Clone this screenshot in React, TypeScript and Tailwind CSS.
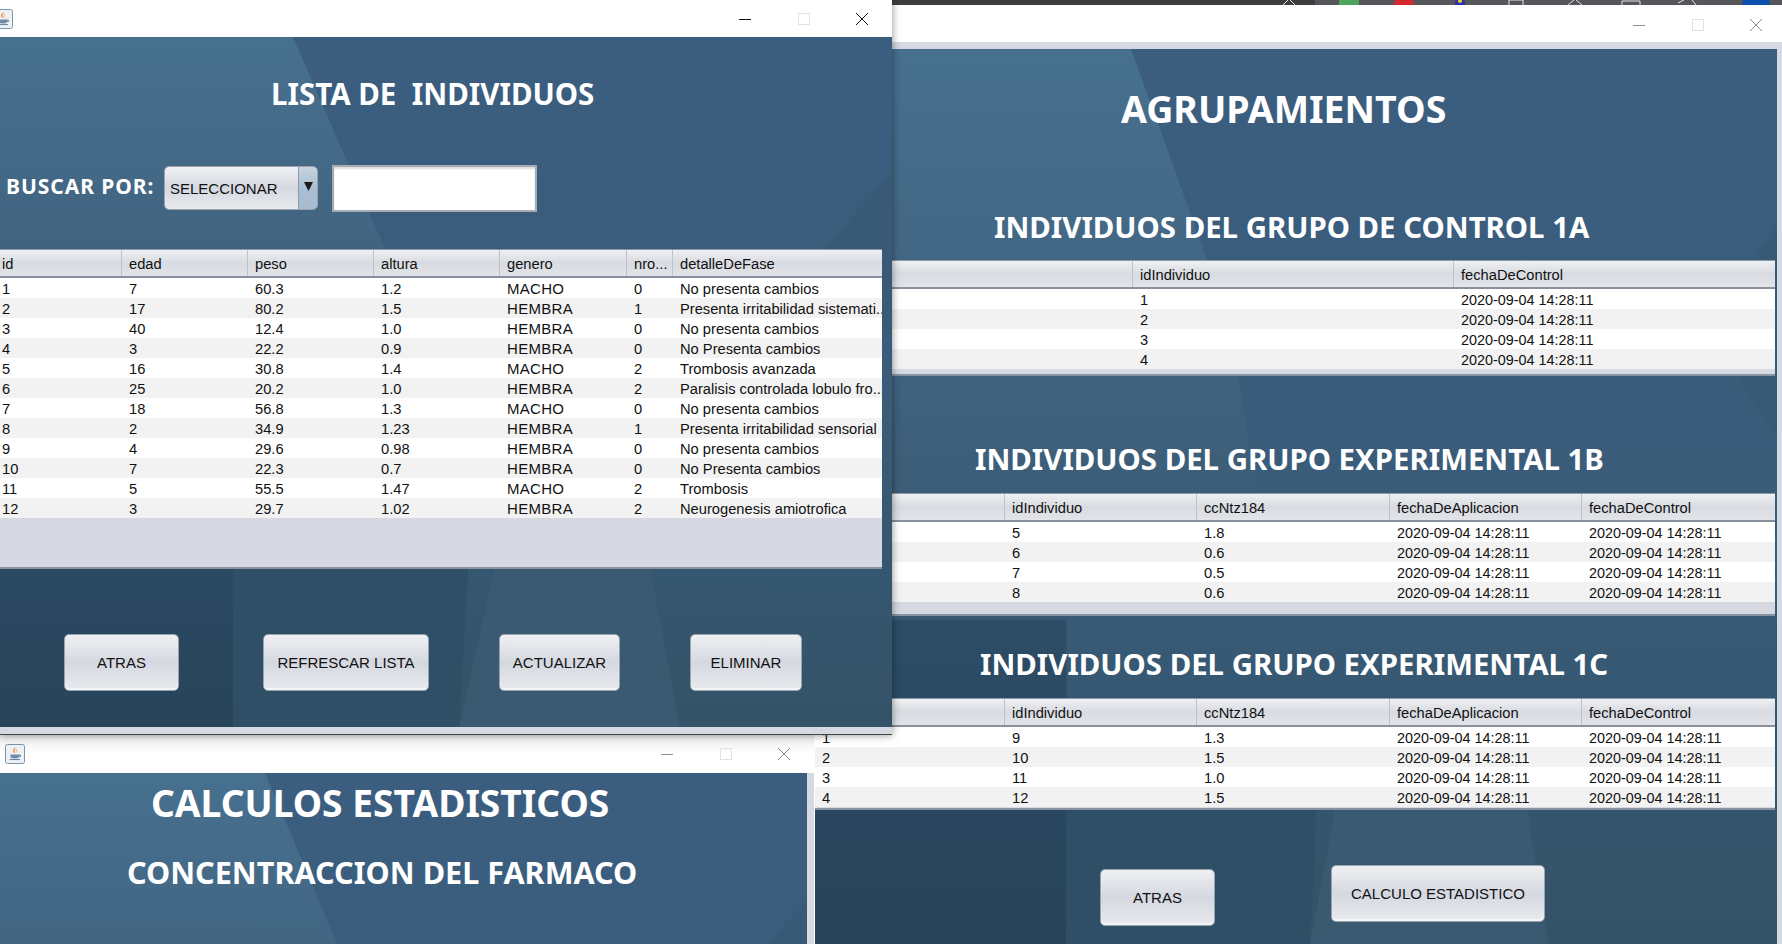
import React from "react";

const UI = "font-['Liberation_Sans',Arial,sans-serif]";
const HEAD = "font-['Noto_Sans',sans-serif] font-bold text-white whitespace-nowrap";

function Wallpaper() {
  return (
    <svg className="absolute inset-0 w-full h-full" viewBox="0 0 892 690" preserveAspectRatio="none" aria-hidden="true">
      <defs>
        <linearGradient id="wpBase" x1="0" y1="0" x2="0" y2="1">
          <stop offset="0" stopColor="#3b5e80" />
          <stop offset="0.55" stopColor="#3a5c79" />
          <stop offset="0.8" stopColor="#35566f" />
          <stop offset="1" stopColor="#345368" />
        </linearGradient>
        <linearGradient id="wpLight" x1="0" y1="0" x2="0" y2="1">
          <stop offset="0" stopColor="#47708f" />
          <stop offset="0.6" stopColor="#40637f" />
          <stop offset="1" stopColor="#3a5a74" />
        </linearGradient>
        <linearGradient id="wpDark" x1="0" y1="0" x2="0" y2="1">
          <stop offset="0" stopColor="#2d4c66" />
          <stop offset="1" stopColor="#27445a" />
        </linearGradient>
      </defs>
      <rect width="892" height="690" fill="url(#wpBase)" />
      <polygon points="0,0 293,0 385,212 420,400 0,400" fill="url(#wpLight)" />
      <polygon points="892,136 824,212 892,300" fill="#385a76" />
      <polygon points="0,440 233,440 233,690 0,690" fill="url(#wpDark)" />
      <polygon points="233,500 470,500 459,690 233,690" fill="#2f4f66" />
      <polygon points="495,530 650,530 680,690 459,690" fill="#3a5a72" />
    </svg>
  );
}

function JavaIcon({ cls }: { cls: string }) {
  return (
    <svg className={cls} width="20" height="20" viewBox="0 0 20 20" aria-hidden="true">
      <rect x="0.5" y="0.5" width="19" height="19" rx="2" fill="#eef1f4" stroke="#7d95aa" />
      <path d="M10 3c1.6 1.6-1.2 2.6-.6 4.4.2.7.9 1.2 1.2 1.8-1.8-.5-3-1.6-2.6-3C8.300 5 10 4.500 10 3z" fill="#e8862c" />
      <path d="M11.500 5.500c.6 1-.6 1.700-.2 3" stroke="#f0a860" fill="none" />
      <path d="M5.500 10.500h8.500v1.800c0 1.400-1.500 2.200-4.200 2.200s-4.300-.8-4.300-2.200z" fill="#6d8ba6" />
      <path d="M14 11h1.500v1.500H14z" fill="none" stroke="#6d8ba6" />
      <path d="M4.500 15.500h10.500" stroke="#6d8ba6" strokeWidth="1.200" />
    </svg>
  );
}

function TitleControls({ faded }: { faded?: boolean }) {
  const line = faded ? "#8f8f8f" : "#111111";
  return (
    <div className="ml-auto flex items-center">
      <svg width="14" height="14" viewBox="0 0 14 14" aria-hidden="true"><path d="M1 7.500h12" stroke={line} /></svg>
      <svg className="ml-[44.500px]" width="14" height="14" viewBox="0 0 14 14" aria-hidden="true"><rect x="1.500" y="1.500" width="11" height="11" fill="none" stroke="#e2e2e2" /></svg>
      <svg className="ml-[44.500px]" width="14" height="14" viewBox="0 0 14 14" aria-hidden="true"><path d="M1 1l12 12M13 1L1 13" stroke={line} /></svg>
    </div>
  );
}

type TableProps = {
  grid: string;
  wrap: string;
  headers: string[];
  rows: string[][];
};

function cellSize(text: string) {
  if (/^[A-Z]+$/.test(text)) return "text-[15px] tracking-[0.3px]";
  if (/^\d{4}-/.test(text)) return "text-[14.400px]";
  return "text-[14.700px]";
}

function JTable({ grid, wrap, headers, rows }: TableProps) {
  return (
    <div className={`${UI} ${wrap} flex flex-col bg-[#d6d9e1] border-t border-[#8c99a8] border-b-2 border-b-[#8793a0] text-[#111111] overflow-hidden`}>
      <div className={`grid ${grid} h-[28px] shrink-0 bg-gradient-to-b from-[#eff0f3] via-[#d8dbe1] to-[#e2e4e9] border-b-2 border-[#8a919d]`}>
        {headers.map((h, i) => (
          <div key={i} className="pl-[7px] text-[14.700px] leading-[28px] border-r border-[#bcc1ca] whitespace-nowrap overflow-hidden last:border-r-0">{h}</div>
        ))}
      </div>
      {rows.map((r, i) => (
        <div key={i} className={`grid ${grid} h-[20px] shrink-0 ${i % 2 === 0 ? "bg-white" : "bg-[#f2f2f2]"}`}>
          {r.map((c, j) => (
            <div key={j} className={`pl-[7px] pt-[1px] leading-[20px] whitespace-nowrap overflow-hidden ${cellSize(c)}`}>{c}</div>
          ))}
        </div>
      ))}
    </div>
  );
}

function JButton({ label, cls }: { label: string; cls: string }) {
  return (
    <div className={`${UI} ${cls} h-[57px] pt-[2px] flex items-center justify-center rounded-[5px] border border-[#9aa3ae] bg-gradient-to-b from-[#eff0f3] via-[#d5d8e0] to-[#e8eaee] text-[15px] text-[#111111] shadow-[inset_0_-2px_0_#f3f4f7]`}>
      {label}
    </div>
  );
}

const T = "2020-09-04 14:28:11";

const individuals = [
  ["1", "7", "60.3", "1.2", "MACHO", "0", "No presenta cambios"],
  ["2", "17", "80.2", "1.5", "HEMBRA", "1", "Presenta irritabilidad sistemati..."],
  ["3", "40", "12.4", "1.0", "HEMBRA", "0", "No presenta cambios"],
  ["4", "3", "22.2", "0.9", "HEMBRA", "0", "No Presenta cambios"],
  ["5", "16", "30.8", "1.4", "MACHO", "2", "Trombosis avanzada"],
  ["6", "25", "20.2", "1.0", "HEMBRA", "2", "Paralisis controlada lobulo fro..."],
  ["7", "18", "56.8", "1.3", "MACHO", "0", "No presenta cambios"],
  ["8", "2", "34.9", "1.23", "HEMBRA", "1", "Presenta irritabilidad sensorial"],
  ["9", "4", "29.6", "0.98", "HEMBRA", "0", "No presenta cambios"],
  ["10", "7", "22.3", "0.7", "HEMBRA", "0", "No Presenta cambios"],
  ["11", "5", "55.5", "1.47", "MACHO", "2", "Trombosis"],
  ["12", "3", "29.7", "1.02", "HEMBRA", "2", "Neurogenesis amiotrofica"],
];

function Taskbar() {
  return (
    <svg className="absolute left-[892px] top-0" width="890" height="5" viewBox="892 0 890 5" aria-hidden="true">
      <rect x="892" y="0" width="423" height="5" fill="#3d3e40" />
      <rect x="1315" y="0" width="467" height="5" fill="#55565a" />
      <path d="M1283 5l6-6 6 6" stroke="#e6e6e6" fill="none" />
      <rect x="1339" y="0" width="20" height="5" fill="#4fa35a" />
      <circle cx="1404" cy="5" r="10" fill="#d8272c" />
      <circle cx="1460" cy="3" r="5" fill="#2b2fb0" />
      <circle cx="1460" cy="1" r="2" fill="#e8d020" />
      <path d="M1509 5V0h14v5" stroke="#e6e6e6" fill="none" />
      <path d="M1568 5l7-6 7 6" stroke="#e6e6e6" fill="none" />
      <path d="M1622 5V1h18v4" stroke="#e6e6e6" fill="none" />
      <path d="M1678 3l6-3M1692 0l4 5" stroke="#e6e6e6" fill="none" />
      <circle cx="1756" cy="6" r="14" fill="#0f4fb0" />
    </svg>
  );
}

export default function App() {
  return (
    <div className="relative w-[1782px] h-[944px] overflow-hidden bg-white">
      <Taskbar />

      {/* Agrupamientos window */}
      <div className="absolute left-[815px] top-[5px] w-[967px] h-[939px] flex flex-col bg-[#d6d9e1]">
        <div className="h-[37px] shrink-0 bg-white flex items-center pr-[19px] pt-[2px]">
          <TitleControls faded />
        </div>
        <div className="h-[7px] shrink-0" />
        <div className="relative w-[962px] flex-1 flex flex-col overflow-hidden">
          <Wallpaper />
          <div className="relative flex flex-col">
            <h1 className={`${HEAD} h-[40px] leading-[40px] text-[37.500px] mt-[40px] ml-[306px]`}>AGRUPAMIENTOS</h1>
            <h2 className={`${HEAD} h-[32px] leading-[32px] text-[29.400px] mt-[82px] ml-[179px]`}>INDIVIDUOS DEL GRUPO DE CONTROL 1A</h2>
            <JTable
              wrap="mt-[17px] w-[960px] h-[116px]"
              grid="grid-cols-[318px_321px_321px]"
              headers={["id", "idIndividuo", "fechaDeControl"]}
              rows={[["1", "1", T], ["2", "2", T], ["3", "3", T], ["4", "4", T]]}
            />
            <h2 className={`${HEAD} h-[32px] leading-[32px] text-[29.400px] mt-[67px] ml-[160px]`}>INDIVIDUOS DEL GRUPO EXPERIMENTAL 1B</h2>
            <JTable
              wrap="mt-[18px] w-[960px] h-[123px]"
              grid="grid-cols-[190px_192px_193px_192px_193px]"
              headers={["id", "idIndividuo", "ccNtz184", "fechaDeAplicacion", "fechaDeControl"]}
              rows={[["1", "5", "1.8", T, T], ["2", "6", "0.6", T, T], ["3", "7", "0.5", T, T], ["4", "8", "0.6", T, T]]}
            />
            <h2 className={`${HEAD} h-[32px] leading-[32px] text-[29.400px] mt-[32px] ml-[165px]`}>INDIVIDUOS DEL GRUPO EXPERIMENTAL 1C</h2>
            <JTable
              wrap="mt-[18px] w-[960px] h-[112px]"
              grid="grid-cols-[190px_192px_193px_192px_193px]"
              headers={["id", "idIndividuo", "ccNtz184", "fechaDeAplicacion", "fechaDeControl"]}
              rows={[["1", "9", "1.3", T, T], ["2", "10", "1.5", T, T], ["3", "11", "1.0", T, T], ["4", "12", "1.5", T, T]]}
            />
            <div className="flex items-start mt-[55px] ml-[285px] gap-[116px]">
              <JButton label="ATRAS" cls="w-[115px] mt-[4px]" />
              <JButton label="CALCULO ESTADISTICO" cls="w-[214px]" />
            </div>
          </div>
        </div>
      </div>

      {/* Calculos window */}
      <div className="absolute left-0 top-[735px] w-[814px] h-[209px] flex flex-col bg-[#d6d9e1] overflow-hidden">
        <div className="h-[38px] shrink-0 bg-gradient-to-b from-[#ececec] via-white to-white flex items-center pl-[5px] pr-[23px]">
          <JavaIcon cls="" />
          <TitleControls faded />
        </div>
        <div className="relative w-[807px] h-[171px] overflow-hidden">
          <div className="absolute left-0 top-0 w-[807px] h-[640px]"><Wallpaper /></div>
          <div className="relative flex flex-col">
            <h2 className={`${HEAD} h-[40px] leading-[40px] text-[37.200px] mt-[10px] ml-[151px]`}>CALCULOS ESTADISTICOS</h2>
            <h2 className={`${HEAD} h-[32px] leading-[32px] text-[30.600px] mt-[33px] ml-[127px]`}>CONCENTRACCION DEL FARMACO</h2>
          </div>
        </div>
      </div>

      {/* Lista window */}
      <div className="absolute left-0 top-0 w-[892px] h-[735px] flex flex-col bg-[#d6d9e1] border-b border-[#444444] shadow-[0_0_8px_rgba(0,0,0,0.45)] overflow-hidden">
        <div className="h-[37px] shrink-0 bg-white flex items-center pl-0 pr-[23px]">
          <JavaIcon cls="-ml-[7px]" />
          <TitleControls />
        </div>
        <div className="relative h-[690px] shrink-0 flex flex-col">
          <Wallpaper />
          <div className="relative flex flex-col">
            <h1 className={`${HEAD} h-[32px] leading-[32px] text-[29.500px] mt-[41px] ml-[271px]`}>LISTA DE&nbsp; INDIVIDUOS</h1>
            <div className="flex items-start mt-[55px] h-[47px]">
              <span className={`${HEAD} text-[21px] leading-[42px] ml-[6px] tracking-[0.950px] w-[158px]`}>BUSCAR POR:</span>
              <div className={`${UI} mt-[1px] w-[154px] h-[44px] flex rounded-[5px] border border-[#9aa3ae] overflow-hidden text-[15px] text-[#111111]`}>
                <div className="flex-1 pl-[5px] leading-[44px] bg-gradient-to-b from-[#eff0f3] via-[#d5d8e0] to-[#e8eaee]">SELECCIONAR</div>
                <div className="w-[19px] flex items-center justify-center pb-[4px] bg-gradient-to-b from-[#c6d3df] via-[#aabed2] to-[#a8bcd0] border-l border-[#8c9bab]">
                  <svg width="9" height="10" viewBox="0 0 9 10" aria-hidden="true"><path d="M0 1h9L4.500 10z" fill="#1a1a1a" /></svg>
                </div>
              </div>
              <div className="ml-[14px] w-[205px] h-[47px] bg-white border-2 border-[#a7abb3] shadow-[inset_0_2px_2px_#dddddd]" />
            </div>
            <JTable
              wrap="mt-[37px] -ml-[5px] w-[887px] h-[320px]"
              grid="grid-cols-[127px_126px_126px_126px_127px_46px_209px]"
              headers={["id", "edad", "peso", "altura", "genero", "nro...", "detalleDeFase"]}
              rows={individuals}
            />
            <div className="flex items-start mt-[65px]">
              <JButton label="ATRAS" cls="ml-[64px] w-[115px]" />
              <JButton label="REFRESCAR LISTA" cls="ml-[84px] w-[166px]" />
              <JButton label="ACTUALIZAR" cls="ml-[70px] w-[121px]" />
              <JButton label="ELIMINAR" cls="ml-[70px] w-[112px]" />
            </div>
          </div>
        </div>
      </div>
    </div>
  );
}
